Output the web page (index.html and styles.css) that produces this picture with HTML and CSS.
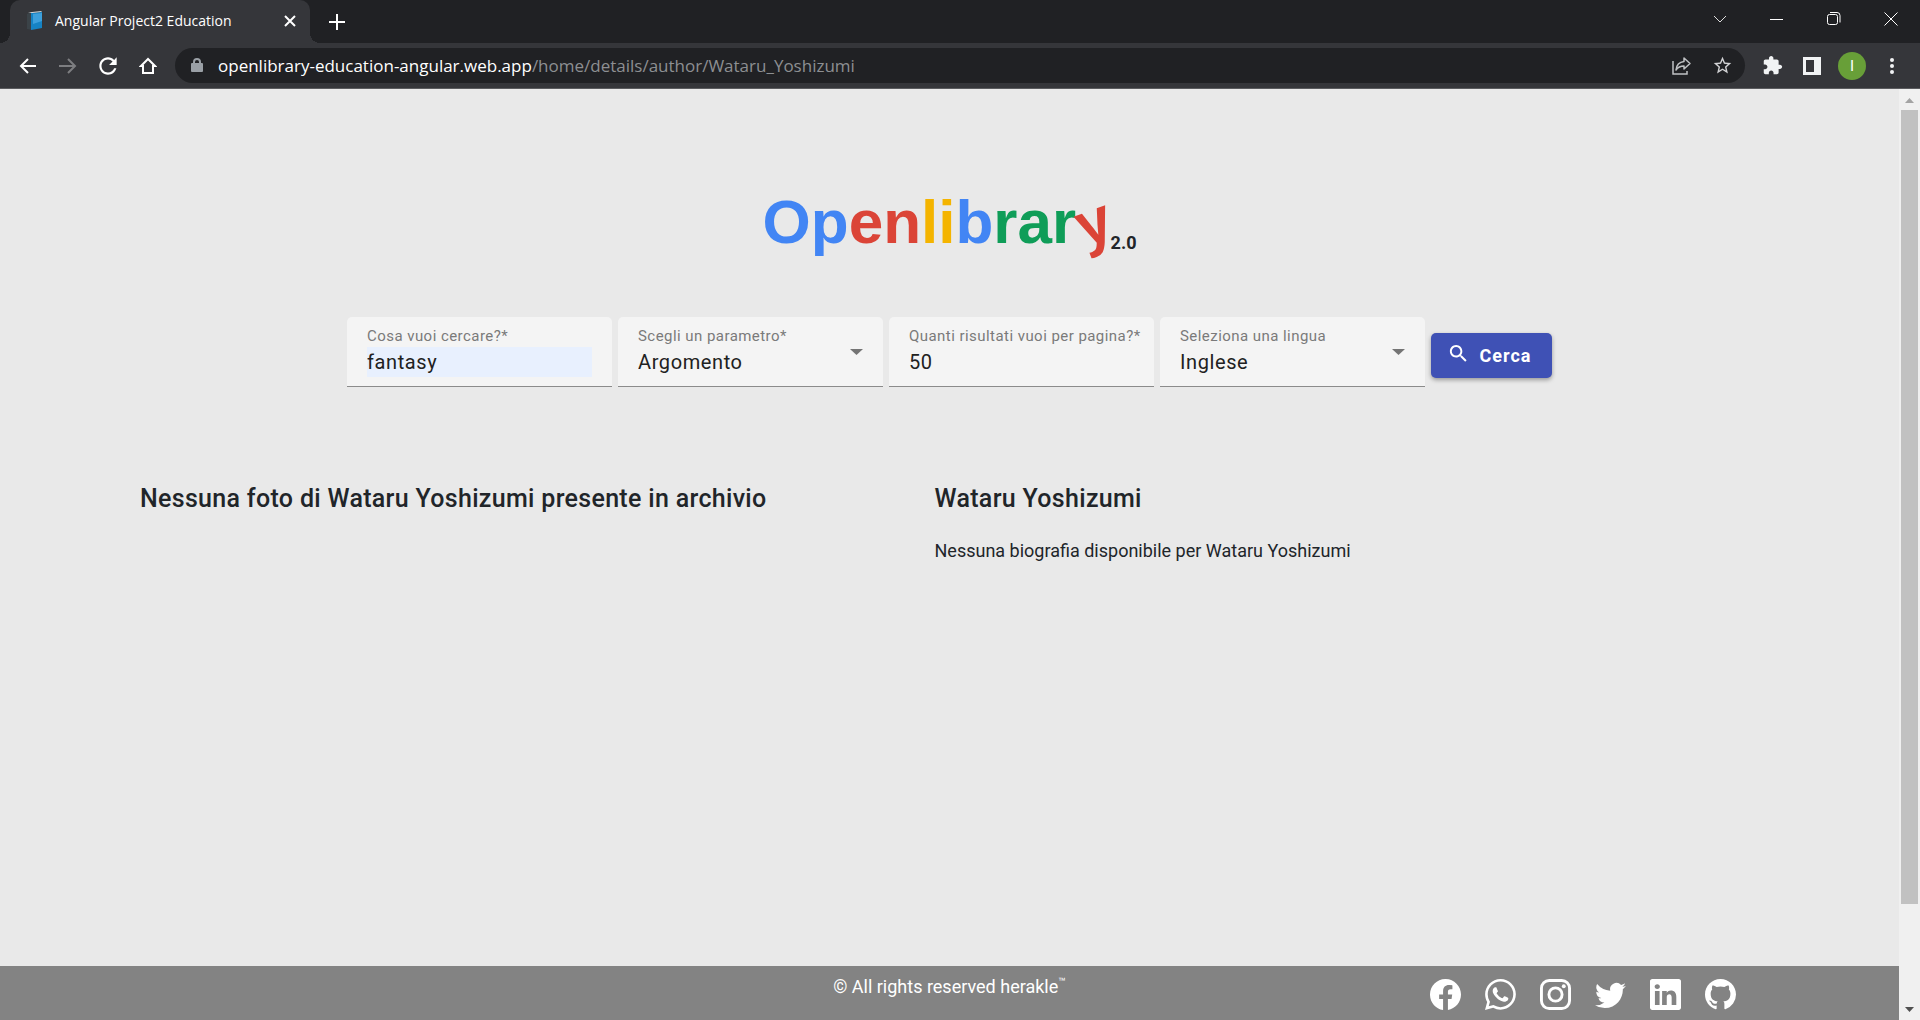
FILE: index.html
```html
<!DOCTYPE html>
<html lang="it">
<head>
<meta charset="utf-8">
<meta name="viewport" content="width=device-width, initial-scale=1">
<title>Angular Project2 Education</title>
<link rel="stylesheet" href="styles.css">
</head>
<body>
<header class="browser">
  <div class="tabstrip">
    <div class="tab">
      <svg class="tab-icon" width="18" height="20" viewBox="0 0 18 20" aria-hidden="true"><path d="M1 3l4-2 11-1v17l-9 2-6-1z" fill="#3b4348"/><path d="M5 2l11-1v16L5 19z" fill="#1583c4"/><path d="M7 3l9-1v8L7 13z" fill="#3da0dc"/><path d="M2 2l4-1 10-1-1 1-9 1z" fill="#d8dde0"/></svg>
      <span class="tab-title">Angular Project2 Education</span>
      <button class="tab-close" aria-label="Chiudi scheda"><svg width="12" height="12" viewBox="0 0 12 12"><path d="M1 1l10 10M11 1L1 11" stroke="#fff" stroke-width="2"/></svg></button>
    </div>
    <button class="tab-new" aria-label="Nuova scheda"><svg width="16" height="16" viewBox="0 0 16 16"><path d="M8 0v16M0 8h16" stroke="#fff" stroke-width="2"/></svg></button>
    <div class="window-controls">
      <button aria-label="Cerca schede"><svg width="14" height="8" viewBox="0 0 14 8"><path d="M1 1l6 6 6-6" fill="none" stroke="#ddd"/></svg></button>
      <button aria-label="Riduci"><svg width="14" height="14" viewBox="0 0 14 14"><path d="M0 7.500h13" stroke="#fff"/></svg></button>
      <button aria-label="Ripristina"><svg width="14" height="14" viewBox="0 0 14 14"><rect x=".5" y="2.500" width="10" height="10" rx="2" fill="none" stroke="#fff"/><path d="M3 .5h7a3 3 0 0 1 3 3v7" fill="none" stroke="#fff"/></svg></button>
      <button aria-label="Chiudi"><svg width="14" height="14" viewBox="0 0 14 14"><path d="M.5.5l13 13M13.500.5l-13 13" stroke="#fff"/></svg></button>
    </div>
  </div>
  <div class="toolbar">
    <button class="tool" aria-label="Indietro"><svg width="18" height="16" viewBox="0 0 18 16"><path d="M17 8H2M9 1L2 8l7 7" fill="none" stroke="#fff" stroke-width="2"/></svg></button>
    <button class="tool" aria-label="Avanti"><svg width="18" height="16" viewBox="0 0 18 16"><path d="M0 8h16M9 1l7 7-7 7" fill="none" stroke="#7d7e81" stroke-width="2"/></svg></button>
    <button class="tool" aria-label="Ricarica"><svg width="26" height="26" viewBox="0 0 24 24"><path fill="#fff" d="M17.650 6.350C16.200 4.900 14.210 4 12 4c-4.420 0-7.990 3.580-7.990 8s3.570 8 7.990 8c3.730 0 6.840-2.550 7.730-6h-2.080c-.82 2.330-3.040 4-5.650 4-3.310 0-6-2.690-6-6s2.690-6 6-6c1.660 0 3.140.69 4.220 1.780L13 11h7V4l-2.350 2.350z"/></svg></button>
    <button class="tool" aria-label="Pagina iniziale"><svg width="18" height="18" viewBox="0 0 18 18"><path d="M9 2L2 9h2v7h10V9h2z" fill="none" stroke="#fff" stroke-width="2"/></svg></button>
    <div class="address">
      <svg width="12" height="15" viewBox="0 0 12 15" aria-hidden="true"><rect y="5" width="12" height="9" rx="1" fill="#9aa0a6"/><path d="M3 6V4a3 3 0 0 1 6 0v2" fill="none" stroke="#9aa0a6" stroke-width="2"/></svg>
      <span class="url"><span class="host">openlibrary-education-angular.web.app</span>/home/details/author/Wataru_Yoshizumi</span>
      <button class="tool" aria-label="Condividi"><svg width="20" height="18" viewBox="0 0 20 18"><path d="M1 4v13h14v-3" fill="none" stroke="#bfc1c3" stroke-width="1.500"/><path d="M12 1l6 5.500L12 12V9C8.500 9 6 10 4 13c.5-5 3.500-8 8-8.500z" fill="none" stroke="#bfc1c3" stroke-width="1.500" stroke-linejoin="round"/></svg></button>
      <button class="tool" aria-label="Aggiungi ai preferiti"><svg width="21" height="21" viewBox="0 0 24 24"><path fill="#d2d3d5" d="M22 9.240l-7.190-.62L12 2 9.190 8.630 2 9.240l5.460 4.730L5.820 21 12 17.270 18.180 21l-1.630-7.030L22 9.240zM12 15.400l-3.760 2.270 1-4.280-3.320-2.880 4.380-.38L12 6.100l1.710 4.040 4.380.38-3.320 2.880 1 4.280L12 15.400z"/></svg></button>
    </div>
    <button class="tool" aria-label="Estensioni"><svg width="21" height="21" viewBox="0 0 24 24"><path fill="#f1f3f4" d="M20.500 11H19V7c0-1.100-.9-2-2-2h-4V3.500C13 2.120 11.880 1 10.500 1S8 2.120 8 3.500V5H4c-1.100 0-1.990.9-1.990 2v3.800H3.500c1.490 0 2.700 1.210 2.700 2.700s-1.210 2.700-2.700 2.700H2V20c0 1.100.9 2 2 2h3.800v-1.500c0-1.490 1.210-2.700 2.700-2.700 1.490 0 2.700 1.210 2.700 2.700V22H17c1.100 0 2-.9 2-2v-4h1.500c1.380 0 2.500-1.120 2.500-2.500S21.880 11 20.500 11z"/></svg></button>
    <button class="tool" aria-label="Riquadro laterale"><svg width="18" height="18" viewBox="0 0 18 18"><path fill="#f1f3f4" fill-rule="evenodd" d="M0 0h18v18H0zM3 3v12h8V3z"/></svg></button>
    <button class="tool" aria-label="Profilo"><span class="avatar">I</span></button>
    <button class="tool" aria-label="Menu"><svg width="4" height="16" viewBox="0 0 4 16" fill="#f1f3f4"><circle cx="2" cy="2" r="2"/><circle cx="2" cy="8" r="2"/><circle cx="2" cy="14" r="2"/></svg></button>
  </div>
</header>

<div class="viewport">
  <div class="page">
    <main class="content">
      <h1 class="logo"><span class="blue">Op</span><span class="red">en</span><span class="yellow">li</span><span class="blue">b</span><span class="green">rar</span><span class="red tilt">y</span><small class="version">2.0</small></h1>

      <form class="search">
        <div class="field">
          <label for="query">Cosa vuoi cercare?*</label>
          <input id="query" class="autofilled" type="text" value="fantasy">
        </div>
        <div class="field">
          <label for="param">Scegli un parametro*</label>
          <select id="param"><option>Argomento</option></select>
          <svg class="arrow" width="13" height="6" viewBox="0 0 13 6" aria-hidden="true"><path d="M0 0h13L6.500 6z" fill="#747474"/></svg>
        </div>
        <div class="field">
          <label for="count">Quanti risultati vuoi per pagina?*</label>
          <input id="count" type="text" value="50">
        </div>
        <div class="field">
          <label for="lang">Seleziona una lingua</label>
          <select id="lang"><option>Inglese</option></select>
          <svg class="arrow" width="13" height="6" viewBox="0 0 13 6" aria-hidden="true"><path d="M0 0h13L6.500 6z" fill="#747474"/></svg>
        </div>
        <button class="submit" type="button"><svg width="23" height="25" viewBox="0 1 24 26" aria-hidden="true"><path fill="#fff" d="M15.500 14h-.79l-.28-.27C15.410 12.590 16 11.110 16 9.500 16 5.910 13.090 3 9.500 3S3 5.910 3 9.500 5.910 16 9.500 16c1.610 0 3.090-.59 4.230-1.570l.27.28v.79l5 4.990L20.490 19l-4.990-5zm-6 0C7.010 14 5 11.990 5 9.500S7.010 5 9.500 5 14 7.010 14 9.500 11.990 14 9.500 14z"/></svg>Cerca</button>
      </form>

      <div class="details">
        <section><h2>Nessuna foto di Wataru Yoshizumi presente in archivio</h2></section>
        <section>
          <h2>Wataru Yoshizumi</h2>
          <p>Nessuna biografia disponibile per Wataru Yoshizumi</p>
        </section>
      </div>
    </main>

    <footer class="footer">
      <p class="copyright">© All rights reserved herakle<sup>™</sup></p>
      <nav class="social">
        <a href="#" aria-label="Facebook"><svg viewBox="0 0 16 16"><path d="M16 8.049c0-4.446-3.582-8.050-8-8.050C3.580 0-.002 3.603-.002 8.050c0 4.017 2.926 7.347 6.750 7.951v-5.625h-2.030V8.050H6.750V6.275c0-2.017 1.195-3.131 3.022-3.131.876 0 1.791.157 1.791.157v1.980h-1.009c-.993 0-1.303.621-1.303 1.258v1.510h2.218l-.354 2.326H9.250V16c3.824-.604 6.750-3.934 6.750-7.951z"/></svg></a>
        <a href="#" aria-label="WhatsApp"><svg viewBox="0 0 16 16"><path d="M13.601 2.326A7.854 7.854 0 0 0 7.994 0C3.627 0 .068 3.558.064 7.926c0 1.399.366 2.760 1.057 3.965L0 16l4.204-1.102a7.933 7.933 0 0 0 3.790.965h.004c4.368 0 7.926-3.558 7.930-7.930A7.898 7.898 0 0 0 13.600 2.326zM7.994 14.521a6.573 6.573 0 0 1-3.356-.92l-.24-.144-2.494.654.666-2.433-.156-.251a6.560 6.560 0 0 1-1.007-3.505c0-3.626 2.957-6.584 6.591-6.584a6.560 6.560 0 0 1 4.660 1.931 6.557 6.557 0 0 1 1.928 4.660c-.004 3.639-2.961 6.592-6.592 6.592zm3.615-4.934c-.197-.099-1.170-.578-1.353-.646-.182-.065-.315-.099-.445.099-.133.197-.513.646-.627.775-.114.133-.232.148-.43.050-.197-.1-.836-.308-1.592-.985-.59-.525-.985-1.175-1.103-1.372-.114-.198-.011-.304.088-.403.087-.088.197-.232.296-.346.1-.114.133-.198.198-.33.065-.134.034-.248-.015-.347-.05-.099-.445-1.076-.612-1.470-.16-.389-.323-.335-.445-.34-.114-.007-.247-.007-.38-.007a.729.729 0 0 0-.529.247c-.182.198-.691.677-.691 1.654 0 .977.71 1.916.81 2.049.098.133 1.394 2.132 3.383 2.992.47.205.84.326 1.129.418.475.152.904.129 1.246.080.38-.058 1.171-.48 1.338-.943.164-.464.164-.86.114-.943-.049-.084-.182-.133-.38-.232z"/></svg></a>
        <a href="#" aria-label="Instagram"><svg viewBox="0 0 16 16"><rect x=".75" y=".75" width="14.500" height="14.500" rx="4" fill="none" stroke="#fff" stroke-width="1.500"/><circle cx="8" cy="8" r="3.400" fill="none" stroke="#fff" stroke-width="1.500"/><circle cx="12.270" cy="3.730" r="1"/></svg></a>
        <a href="#" aria-label="Twitter"><svg viewBox="0 0 16 16"><path d="M5.026 15c6.038 0 9.341-5.003 9.341-9.334 0-.14 0-.282-.006-.422A6.685 6.685 0 0 0 16 3.542a6.658 6.658 0 0 1-1.889.518 3.301 3.301 0 0 0 1.447-1.817 6.533 6.533 0 0 1-2.087.793A3.286 3.286 0 0 0 7.875 6.030a9.325 9.325 0 0 1-6.767-3.429 3.289 3.289 0 0 0 1.018 4.382A3.323 3.323 0 0 1 .64 6.575v.045a3.288 3.288 0 0 0 2.632 3.218 3.203 3.203 0 0 1-.865.115 3.230 3.230 0 0 1-.614-.057 3.283 3.283 0 0 0 3.067 2.277A6.588 6.588 0 0 1 .78 13.580a6.320 6.320 0 0 1-.78-.045A9.344 9.344 0 0 0 5.026 15z"/></svg></a>
        <a href="#" aria-label="LinkedIn"><svg viewBox="0 0 16 16"><path d="M0 1.146C0 .513.526 0 1.175 0h13.650C15.474 0 16 .513 16 1.146v13.708c0 .633-.526 1.146-1.175 1.146H1.175C.526 16 0 15.487 0 14.854V1.146zm4.943 12.248V6.169H2.542v7.225h2.401zm-1.200-8.212c.837 0 1.358-.554 1.358-1.248-.015-.709-.52-1.248-1.342-1.248-.822 0-1.359.54-1.359 1.248 0 .694.521 1.248 1.327 1.248h.016zm4.908 8.212V9.359c0-.216.016-.432.080-.586.173-.431.568-.878 1.232-.878.869 0 1.216.662 1.216 1.634v3.865h2.401V9.250c0-2.220-1.184-3.252-2.764-3.252-1.274 0-1.845.7-2.165 1.193V6.169h-2.400c.03.678 0 7.225 0 7.225h2.400z"/></svg></a>
        <a href="#" aria-label="GitHub"><svg viewBox="0 0 16 16"><path d="M8 0C3.580 0 0 3.580 0 8c0 3.540 2.290 6.530 5.470 7.590.4.070.55-.17.55-.38 0-.19-.01-.82-.01-1.490-2.010.37-2.530-.49-2.690-.94-.09-.23-.48-.94-.82-1.130-.28-.15-.68-.52-.01-.53.63-.01 1.080.58 1.230.82.72 1.210 1.870.87 2.330.66.07-.52.28-.87.51-1.070-1.780-.2-3.640-.89-3.640-3.950 0-.87.31-1.590.82-2.150-.08-.2-.36-1.020.080-2.120 0 0 .67-.21 2.200.82.64-.18 1.320-.27 2-.27.68 0 1.360.090 2 .27 1.530-1.040 2.200-.82 2.200-.82.44 1.100.16 1.920.080 2.120.51.56.82 1.270.82 2.150 0 3.070-1.870 3.750-3.650 3.950.29.25.54.73.54 1.480 0 1.070-.01 1.930-.01 2.200 0 .21.15.46.55.38A8.012 8.012 0 0 0 16 8c0-4.420-3.580-8-8-8z"/></svg></a>
      </nav>
    </footer>
  </div>
  <div class="scrollbar" aria-hidden="true">
    <svg width="21" height="21" viewBox="0 0 21 21"><path d="M6 14h9l-4.500-5z" fill="#a3a3a3"/></svg>
    <div class="thumb"></div>
    <svg width="21" height="21" viewBox="0 0 21 21"><path d="M6 8h9l-4.500 5z" fill="#505050"/></svg>
  </div>
</div>
</body>
</html>
```
FILE: styles.css
```css
* { box-sizing: border-box; }

body {
  margin: 0;
  min-height: 100vh;
  display: flex;
  flex-direction: column;
  font-family: Roboto, sans-serif;
  color: #212529;
  background: #e9e9e9;
}

button {
  border: 0;
  padding: 0;
  background: none;
  font: inherit;
  color: inherit;
  display: flex;
  align-items: center;
  justify-content: center;
}

/* Browser frame */
.browser {
  font-family: "Open Sans", sans-serif;
  background: #202124;
  border-bottom: 1px solid #5b5c5f;
}
.tabstrip {
  display: flex;
  height: 43px;
  padding-left: 10px;
}
.tab {
  position: relative;
  display: flex;
  align-items: center;
  width: 300px;
  padding: 0 14px 2px 16px;
  border-radius: 10px 10px 0 0;
  background: #35363a;
  color: #fff;
}
.tab::before,
.tab::after {
  content: "";
  position: absolute;
  bottom: 0;
  width: 10px;
  height: 10px;
}
.tab::before {
  right: 100%;
  background: radial-gradient(circle at 0 0, #202124 10px, #35363a 10px);
}
.tab::after {
  left: 100%;
  background: radial-gradient(circle at 100% 0, #202124 10px, #35363a 10px);
}
.tab-title {
  flex: 1;
  padding-left: 11px;
  font-size: 14px;
}
.tab-new { width: 54px; }
.window-controls {
  display: flex;
  margin-left: auto;
  height: 37px;
  padding-right: 1px;
}
.window-controls button { width: 57px; }

.toolbar {
  display: flex;
  align-items: center;
  height: 45px;
  padding: 0 8px;
  background: #35363a;
}
.tool {
  flex: none;
  width: 40px;
  height: 35px;
}
.address {
  flex: 1;
  display: flex;
  align-items: center;
  height: 35px;
  margin: 0 7px;
  padding: 0 3px 0 16px;
  border-radius: 18px;
  background: #202124;
}
.url {
  flex: 1;
  padding-left: 15px;
  font-size: 17px;
  color: #8d8f92;
}
.host { color: #fff; }
.avatar {
  width: 28px;
  height: 28px;
  border-radius: 50%;
  background: #689f38;
  color: #fff;
  font: 15px/28px Roboto, sans-serif;
}

/* Page area and its scrollbar */
.viewport {
  flex: 1;
  display: flex;
}
.page {
  flex: 1;
  display: flex;
  flex-direction: column;
}
.content { flex: 1; }
.scrollbar {
  width: 21px;
  display: flex;
  flex-direction: column;
  background: #f0f0f0;
}
.thumb {
  flex: 1;
  margin: 0 2px 95px;
  background: #c1c1c1;
}

/* Logo */
.logo {
  margin: 0;
  padding-top: 97px;
  text-align: center;
  font: bold 62px/72px "Liberation Sans", Arial, sans-serif;
}
.blue { color: #4285f4; }
.red { color: #db4437; }
.yellow { color: #f4b400; }
.green { color: #0f9d58; }
.tilt {
  display: inline-block;
  transform: rotate(-20deg);
}
.version {
  font: bold 18px/18px Roboto, sans-serif;
  vertical-align: -6px;
}

/* Search form */
.search {
  display: flex;
  justify-content: center;
  align-items: center;
  gap: 6px;
  margin-top: 59px;
}
.field {
  position: relative;
  display: flex;
  flex-direction: column;
  width: 265px;
  height: 70px;
  padding: 8px 20px 9px;
  border-bottom: 1px solid #8b8b8b;
  border-radius: 5px 5px 0 0;
  background: #f4f4f4;
}
.field label {
  font-size: 15px;
  line-height: 22px;
  letter-spacing: .03em;
  white-space: nowrap;
  color: #7a7a7a;
}
.field input,
.field select {
  width: 100%;
  height: 30px;
  padding: 0;
  border: 0;
  appearance: none;
  background: transparent;
  font: 20px/30px Roboto, sans-serif;
  letter-spacing: .03em;
  color: #212121;
}
.field .autofilled { background: #e8f0fe; }
.arrow {
  position: absolute;
  right: 20px;
  top: 32px;
}
.submit {
  gap: 10px;
  width: 121px;
  height: 45px;
  margin-top: 6px;
  padding-right: 5px;
  border-radius: 5px;
  background: #3f51b5;
  box-shadow: 0 2px 4px rgba(0, 0, 0, .35);
  color: #fff;
  font-size: 18px;
  font-weight: 700;
  letter-spacing: 1px;
}

/* Author details */
.details {
  display: grid;
  grid-template-columns: 1fr 1fr;
  padding: 96px 170px 0 140px;
}
.details h2 {
  margin: 0;
  font-size: 25px;
  line-height: 32px;
  font-weight: 500;
  letter-spacing: .0125em;
}
.details p {
  margin: 22px 0 0;
  font-size: 18px;
  line-height: 28px;
}

/* Footer */
.footer {
  display: grid;
  grid-template-columns: 1fr 1fr 1fr;
  height: 54px;
  background: #838383;
  color: #fff;
}
.copyright {
  grid-column: 2;
  margin: 0;
  padding-top: 7px;
  text-align: center;
  font-size: 18px;
  line-height: 28px;
}
.copyright sup {
  font-size: 12px;
  line-height: 1;
}
.social {
  display: flex;
  justify-content: center;
  gap: 24px;
  padding-top: 13px;
}
.social svg {
  display: block;
  width: 31px;
  height: 31px;
  fill: #fff;
}
```
